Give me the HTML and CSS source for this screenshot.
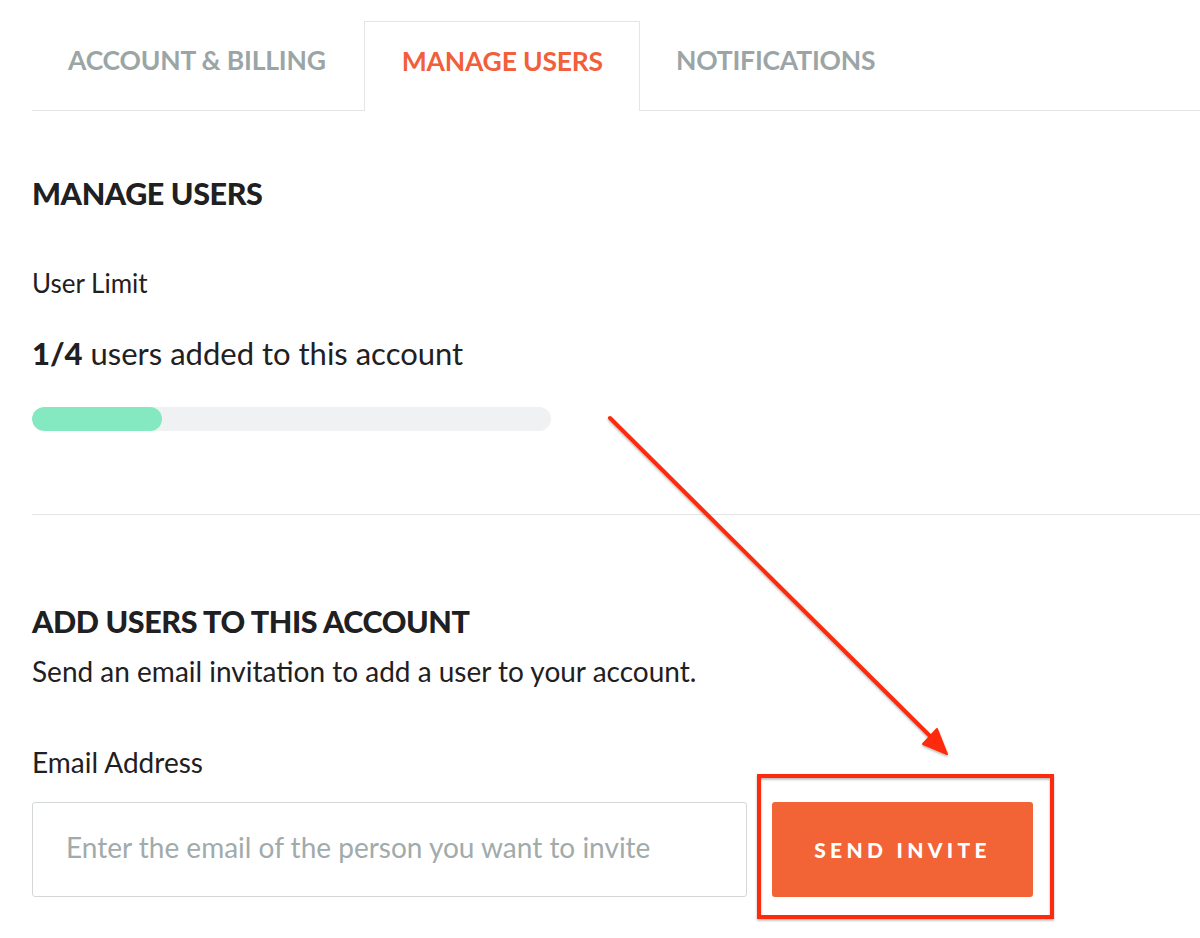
FILE: index.html
```html
<!DOCTYPE html>
<html lang="en">
<head>
<meta charset="utf-8">
<title>Manage Users</title>
<link rel="stylesheet" href="styles.css">
</head>
<body>
<div class="page">
  <nav class="tabs">
    <div class="tab">ACCOUNT &amp; BILLING</div>
    <div class="tab active">MANAGE USERS</div>
    <div class="tab">NOTIFICATIONS</div>
  </nav>

  <section class="section limit">
    <h2 class="heading">MANAGE USERS</h2>
    <div class="label">User Limit</div>
    <div class="count"><strong>1/4</strong> users added to this account</div>
    <div class="bar"><div class="bar-fill" style="width:25%"></div></div>
  </section>

  <hr class="divider">

  <section class="section add">
    <h2 class="heading">ADD USERS TO THIS ACCOUNT</h2>
    <p class="desc">Send an email invitation to add a user to your account.</p>
    <div class="label email-label">Email Address</div>
    <div class="form-row">
      <input class="email" type="text" placeholder="Enter the email of the person you want to invite">
      <div class="btn-wrap">
        <button class="btn">SEND INVITE</button>
      </div>
    </div>
  </section>

  <svg class="annotation" width="1200" height="938" viewBox="0 0 1200 938">
    <defs>
      <filter id="sh" x="-5%" y="-5%" width="110%" height="110%">
        <feDropShadow dx="0" dy="1.5" stdDeviation="1.2" flood-color="#000" flood-opacity="0.3"/>
      </filter>
    </defs>
    <g filter="url(#sh)">
      <line x1="610" y1="418" x2="932" y2="738" stroke="#fd2a08" stroke-width="4" stroke-linecap="round"/>
      <polygon points="947,754 923,744 937,729" fill="#fd2a08" stroke="#fd2a08" stroke-width="2" stroke-linejoin="round"/>
      <rect x="759" y="776" width="293" height="141" fill="none" stroke="#fd2a08" stroke-width="4"/>
    </g>
  </svg>
</div>
</body>
</html>
```

FILE: styles.css
```css
* { box-sizing: border-box; }

html, body {
  margin: 0;
  padding: 0;
  background: #ffffff;
}

body {
  font-family: Lato, "Open Sans", sans-serif;
  color: #1f2022;
}

.page {
  position: relative;
  width: 1200px;
  height: 938px;
  overflow: hidden;
  padding-left: 32px;
}

.tabs {
  display: flex;
  margin-top: 21px;
  border-bottom: 1px solid #e4e6e6;
  height: 90px;
}

.tab {
  display: flex;
  align-items: center;
  padding: 0 37px 12px 35px;
  font-size: 26.5px;
  font-weight: 700;
  letter-spacing: -0.2px;
  color: #9ba5a6;
  border: 1px solid transparent;
  border-bottom: none;
}

.tab.active {
  color: #f1603a;
  border-color: #e4e6e6;
  background: #fff;
  margin-bottom: -1px;
  padding: 0 36px 12px 37px;
}

.heading {
  margin: 0;
  font-size: 30.5px;
  font-weight: 900;
  letter-spacing: -0.4px;
  line-height: 1;
  color: #1f2022;
}

.limit {
  padding-top: 67px;
}

.label {
  font-size: 28px;
  line-height: 1;
  color: #1f2022;
}

.limit .label {
  font-size: 26px;
  margin-top: 61.5px;
}

.count {
  margin-top: 41.7px;
  font-size: 31px;
  line-height: 1;
}

.count strong {
  font-weight: 900;
}

.bar {
  margin-top: 38.3px;
  width: 519px;
  height: 24px;
  border-radius: 12px;
  background: #f0f1f2;
  overflow: hidden;
}

.bar-fill {
  height: 100%;
  border-radius: 12px;
  background: #84e9c1;
}

.divider {
  margin: 83px 0 0 0;
  border: none;
  border-top: 1px solid #e4e6e6;
  height: 0;
}

.add {
  padding-top: 91.4px;
}

.desc {
  margin: 20px 0 0 0;
  font-size: 28px;
  line-height: 1;
}

.email-label {
  margin-top: 62.8px;
}

.form-row {
  display: flex;
  align-items: center;
  margin-top: 26.3px;
}

.email {
  width: 715px;
  height: 95px;
  border: 1px solid #d4d7d7;
  border-radius: 3px;
  padding: 0 33px 4px 33px;
  font-family: Lato, "Open Sans", sans-serif;
  font-size: 28px;
  color: #1f2022;
  outline: none;
}

.email::placeholder {
  color: #a1abab;
}

.btn-wrap {
  margin-left: 25px;
}

.btn {
  width: 261px;
  height: 95px;
  border: none;
  border-radius: 3px;
  background: #f26335;
  color: #ffffff;
  font-family: Lato, "Open Sans", sans-serif;
  font-weight: 900;
  font-size: 21px;
  letter-spacing: 4.3px;
  padding: 0;
  cursor: pointer;
}

.annotation {
  position: absolute;
  left: 0;
  top: 0;
  pointer-events: none;
}
```
